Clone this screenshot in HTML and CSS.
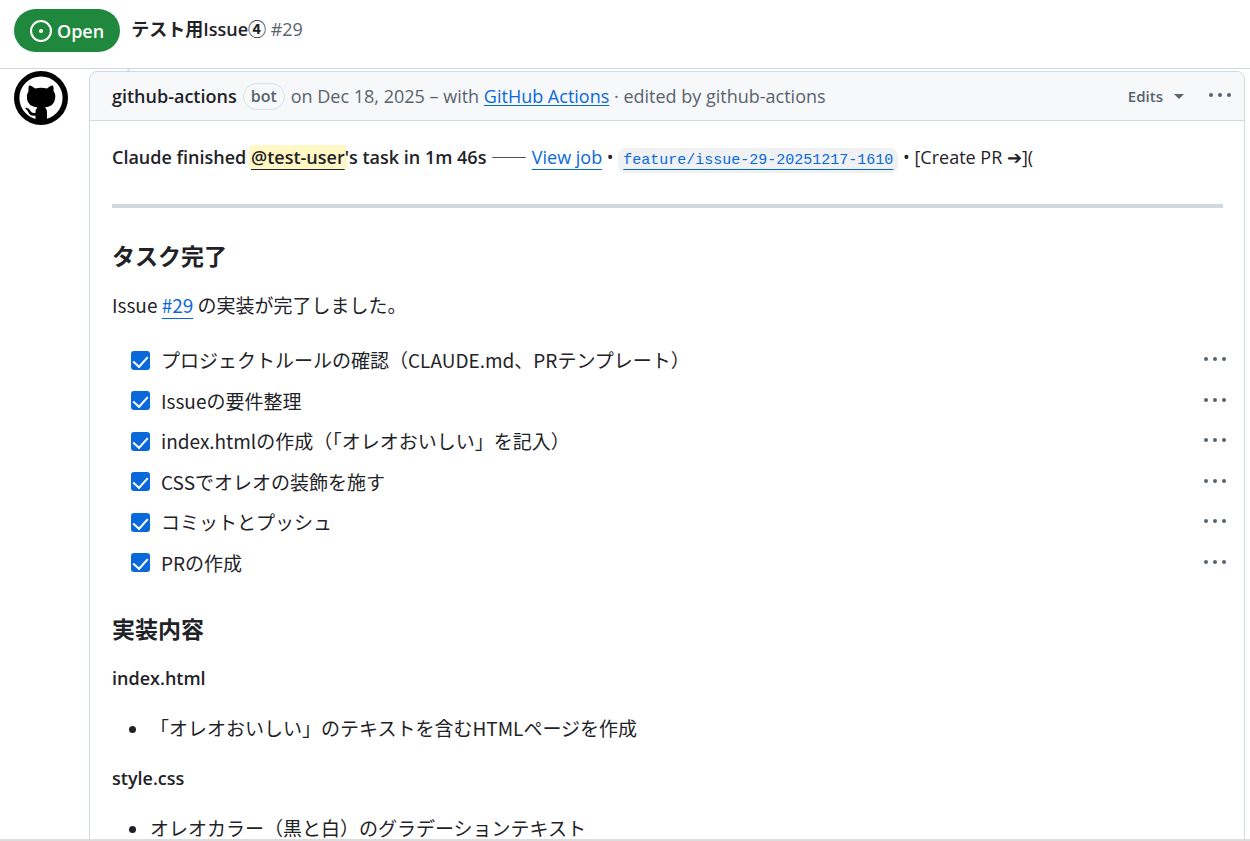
FILE: index.html
```html
<!DOCTYPE html>
<html lang="ja">
<head>
    <meta charset="UTF-8">
    <meta name="viewport" content="width=device-width, initial-scale=1.0">
    <title>テスト用Issue④ #29</title>
    <link rel="stylesheet" href="styles.css">
</head>
<body>

    <!-- Issueのタイトルバー -->
    <header class="issue-bar">
        <span class="state">
            <svg width="22" height="22" viewBox="0 0 16 16" fill="#fff" aria-hidden="true">
                <path d="M8 9.5a1.5 1.5 0 1 0 0-3 1.5 1.5 0 0 0 0 3Z"/>
                <path d="M8 0a8 8 0 1 1 0 16A8 8 0 0 1 8 0ZM1.5 8a6.5 6.5 0 1 0 13 0 6.5 6.5 0 0 0-13 0Z"/>
            </svg>
            Open
        </span>
        <h1 class="issue-title">テスト用Issue④ <span class="issue-number">#29</span></h1>
    </header>

    <main class="timeline">
        <svg class="avatar" width="56" height="56" viewBox="0 1 56 56" role="img" aria-label="github-actions">
            <circle cx="28" cy="28" r="24.300" fill="#fff" stroke="#000" stroke-width="5.400"/>
            <path d="M16 15.500Q18 15 22 18.500Q28 17 34 18.500Q38 15 40 15.500Q41 18 40.500 21Q43 24 42 29Q41 36.500 32 37.500Q34 39 34 42V53H22.500V45.500Q17.500 46.500 15.500 42.500Q14.500 40 12.500 38.800Q11.800 37.600 13.500 37.700Q16 38 17.500 41Q19 43.800 22.500 42.800Q22.500 39 24.500 37.500Q15 36.500 14 29Q13.500 24 15.500 21Q15 18 16 15.500Z"/>
        </svg>

        <!-- コメント本体 -->
        <article class="comment">
            <header class="comment-header">
                <div class="comment-meta">
                    <strong class="author">github-actions</strong>
                    <span class="label">bot</span>
                    <span>on Dec 18, 2025 – with <a href="#" class="app-link">GitHub Actions</a> · edited by github-actions</span>
                </div>
                <button type="button" class="edits">Edits <span class="caret"></span></button>
                <button type="button" class="menu" aria-label="メニュー"><i></i><i></i><i></i></button>
            </header>

            <div class="comment-body">
                <p><strong>Claude finished <a href="#" class="mention">@test-user</a>'s task in 1m 46s</strong> <span class="dash">——</span> <a href="#">View job</a> • <code><a href="#">feature/issue-29-20251217-1610</a></code> • [Create PR ➔](</p>
                <hr>

                <h3>タスク完了</h3>
                <p class="ja">Issue <a href="#">#29</a> の実装が完了しました。</p>

                <ul class="task-list ja">
                    <li>
                        <label><input type="checkbox" checked> プロジェクトルールの確認（CLAUDE.md、PRテンプレート）</label>
                        <button type="button" class="menu" aria-label="タスクのメニュー"><i></i><i></i><i></i></button>
                    </li>
                    <li>
                        <label><input type="checkbox" checked> Issueの要件整理</label>
                        <button type="button" class="menu" aria-label="タスクのメニュー"><i></i><i></i><i></i></button>
                    </li>
                    <li>
                        <label><input type="checkbox" checked> index.htmlの作成（「オレオおいしい」を記入）</label>
                        <button type="button" class="menu" aria-label="タスクのメニュー"><i></i><i></i><i></i></button>
                    </li>
                    <li>
                        <label><input type="checkbox" checked> CSSでオレオの装飾を施す</label>
                        <button type="button" class="menu" aria-label="タスクのメニュー"><i></i><i></i><i></i></button>
                    </li>
                    <li>
                        <label><input type="checkbox" checked> コミットとプッシュ</label>
                        <button type="button" class="menu" aria-label="タスクのメニュー"><i></i><i></i><i></i></button>
                    </li>
                    <li>
                        <label><input type="checkbox" checked> PRの作成</label>
                        <button type="button" class="menu" aria-label="タスクのメニュー"><i></i><i></i><i></i></button>
                    </li>
                </ul>

                <h3>実装内容</h3>
                <h4>index.html</h4>
                <ul class="ja">
                    <li>「オレオおいしい」のテキストを含むHTMLページを作成</li>
                </ul>
                <h4>style.css</h4>
                <ul class="ja">
                    <li>オレオカラー（黒と白）のグラデーションテキスト</li>
                </ul>
            </div>
        </article>
    </main>

</body>
</html>
```
FILE: styles.css
```css
* {
    margin: 0;
    padding: 0;
    box-sizing: border-box;
}
body {
    display: flex;
    flex-direction: column;
    height: 100vh;
    overflow: hidden;
    border-bottom: 2px solid #dcdcdc;
    background-color: #fff;
    color: #1f2328;
    font-family: "Open Sans", "Noto Sans CJK JP", sans-serif;
    font-size: 18px;
    line-height: 28px;
}
a {
    color: #0969da;
    text-underline-offset: 5px;
}
strong, h1, h3, h4 {
    font-weight: 600;
}
button {
    border: none;
    background: none;
    color: #59636e;
    font-family: inherit;
    cursor: pointer;
}

/* 日本語の本文 */
.ja {
    font-family: "Noto Sans CJK JP", sans-serif;
    font-size: 19px;
}

/* タイトルバー */
.issue-bar {
    display: flex;
    align-items: center;
    flex-shrink: 0;
    gap: 11px;
    padding: 9px 14px 16px;
    border-bottom: 1px solid #d1d9e0;
}
.state {
    display: flex;
    align-items: center;
    gap: 5px;
    height: 43px;
    padding: 0 16px;
    border-radius: 22px;
    background-color: #1f883d;
    color: #fff;
    font-weight: 600;
}
.issue-title {
    padding-bottom: 4px;
    font-size: 18px;
}
.issue-number {
    color: #59636e;
    font-weight: 400;
}

/* タイムライン */
.timeline {
    display: flex;
    align-items: flex-start;
    flex: 1;
    gap: 20px;
    min-height: 0;
    padding: 2px 5px 0 13px;
    overflow: hidden;
}
.avatar {
    flex-shrink: 0;
}
.comment {
    position: relative;
    flex: 1;
    min-width: 0;
    border: 1px solid #d1d9e0;
    border-radius: 8px;
}
.comment::before {
    content: "";
    position: absolute;
    top: -3px;
    left: 37px;
    width: 3px;
    height: 2px;
    background-color: #dfe4e9;
}
.comment-header {
    display: flex;
    align-items: center;
    height: 49px;
    padding: 0 13px 0 22px;
    border-bottom: 1px solid #d1d9e0;
    border-radius: 7px 7px 0 0;
    background-color: #f6f8fa;
    color: #59636e;
}
.comment-meta {
    display: flex;
    align-items: center;
    flex: 1;
    gap: 6px;
}
.author {
    color: #1f2328;
}
.label {
    padding: 0 7px;
    border: 1px solid #d9dfe5;
    border-radius: 14px;
    font-size: 16px;
    font-weight: 600;
    line-height: 25px;
}
.app-link {
    text-underline-offset: 2px;
}
.edits {
    display: flex;
    align-items: center;
    gap: 11px;
    margin-right: 25px;
    font-size: 15px;
    font-weight: 600;
}
.caret {
    border: 5px solid transparent;
    border-top-color: #59636e;
    border-bottom: none;
}

/* 三点メニュー */
.menu {
    display: flex;
    gap: 5px;
    padding: 7px 0 9px;
}
.menu i {
    width: 4px;
    height: 4px;
    border-radius: 50%;
    background-color: #59636e;
}

/* コメント本文 */
.comment-body {
    padding: 22px 21px 0 22px;
}
.comment-body p,
.comment-body ul,
.comment-body h4 {
    margin-bottom: 22px;
}
.comment-body hr {
    height: 4px;
    margin: 33px 0;
    border: none;
    background-color: #d1d9e0;
}
.comment-body h3 {
    margin: 31px 0 20px;
    font-size: 23px;
    line-height: 30px;
}
.comment-body h4 {
    font-size: 18px;
}
.comment-body ul {
    padding-left: 38px;
}
.mention {
    margin: 0 -2px;
    padding: 0 2px;
    border-radius: 4px;
    background-color: #fff8c5;
    color: #1f2328;
}
.dash {
    font-family: "Noto Sans CJK JP", sans-serif;
    line-height: 1;
}
code {
    padding: 4px 5px;
    border-radius: 8px;
    background-color: #eff1f3;
    font-family: "Liberation Mono", monospace;
    font-size: 15px;
    line-height: 1;
}

/* タスクリスト */
.comment-body .task-list {
    display: grid;
    grid-auto-rows: 1fr;
    min-height: 243px;
    margin: -1px -3px 22px 0;
    padding-left: 19px;
    list-style: none;
}
.task-list li {
    display: flex;
    align-items: center;
    justify-content: space-between;
}
.task-list label {
    display: flex;
    align-items: center;
    gap: 11px;
}
.task-list input {
    display: flex;
    justify-content: center;
    width: 19px;
    height: 19px;
    padding-top: 2px;
    border-radius: 3px;
    background-color: #fff;
    appearance: none;
}
.task-list input:checked {
    background-color: #0969da;
}
.task-list input:checked::before {
    content: "";
    width: 7px;
    height: 12px;
    border: solid #fff;
    border-width: 0 2px 2px 0;
    transform: rotate(42deg);
}
```
